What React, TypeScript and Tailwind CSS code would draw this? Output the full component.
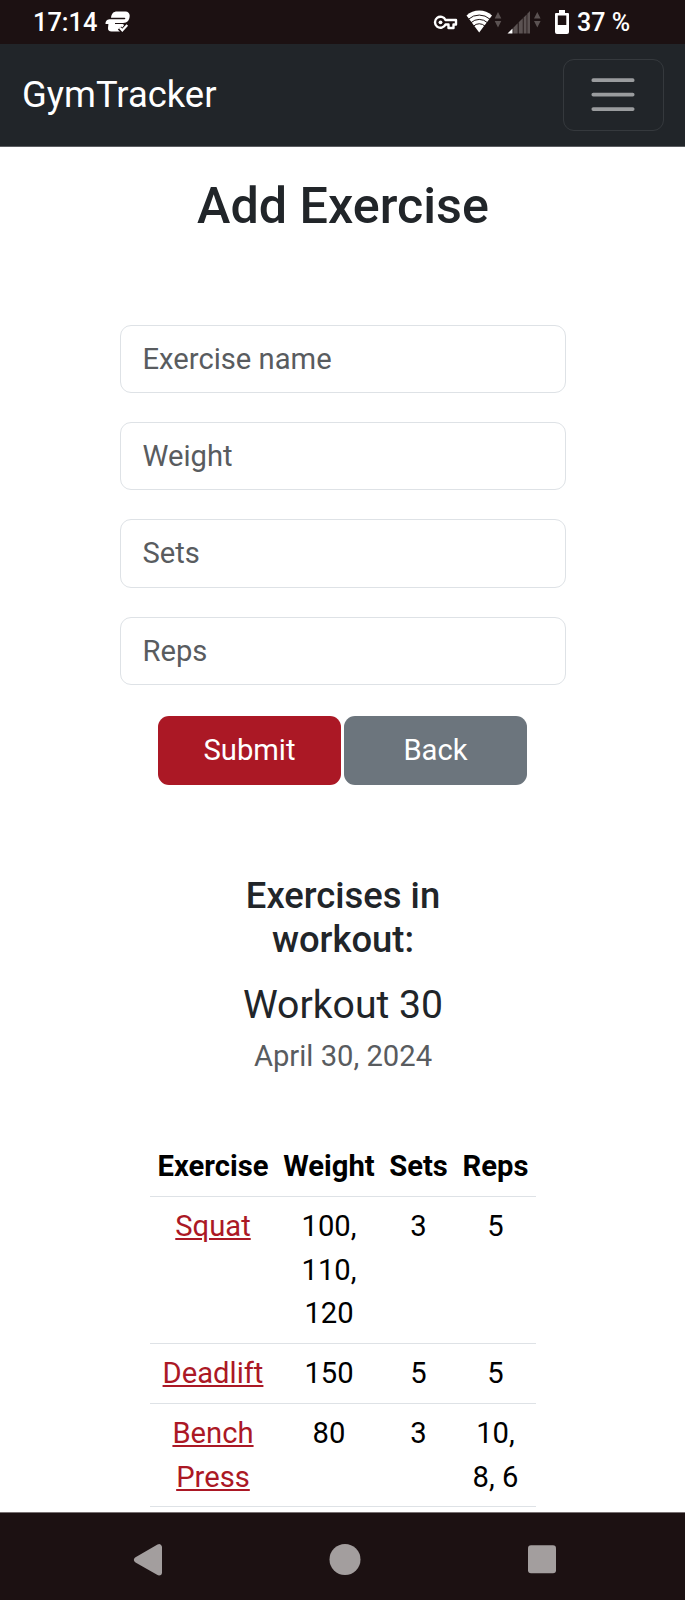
import type { ReactNode } from "react";

const fields = ["Exercise name", "Weight", "Sets", "Reps"];

const exercises = [
  { name: "Squat", weight: "100, 110, 120", sets: "3", reps: "5", row: "h-[147px]" },
  { name: "Deadlift", weight: "150", sets: "5", reps: "5", row: "h-[60px]" },
  { name: "Bench Press", weight: "80", sets: "3", reps: "10, 8, 6", row: "h-[103px]" },
];

function AppBadgeIcon() {
  return (
    <svg className="mt-[11px] ml-[8px] h-[22px] w-[26px]" viewBox="0 0 26 22" fill="#fff">
      <path d="M12 0.500H20.500C23 0.500 24.700 2.200 24.700 4.500C24.700 9 22.500 12 18 12H10V13H16C18 13 19 13.400 19 14.500L15 20.500H6.500C4 20.500 2.800 19 3 17L3.400 13H0.500C0.500 9.500 2.500 8.200 5.500 8.200H19.500Q20.300 8.200 20.300 7.500Q20.300 6.800 19.500 6.800H6C6.500 2.500 8.500 0.500 12 0.500Z" />
      <path d="M14.500 17L17.300 20L22 14.500" fill="none" stroke="#1c1112" strokeWidth="4.500" />
      <path d="M14.800 16.800L17.300 19.300L22.300 14" fill="none" stroke="#fff" strokeWidth="2.200" />
    </svg>
  );
}

function StatusIcons() {
  return (
    <svg className="h-[44px] w-[140px]" viewBox="430 0 140 44">
      <g fill="none" stroke="#fff" strokeWidth="2.400" strokeLinejoin="round">
        <path d="M445.500 20H456V24.500H453.500V28H448.500V24.500H445.500A5.500 5.500 0 1 1 445.500 20Z" />
      </g>
      <circle cx="440.500" cy="22.300" r="1.900" fill="#fff" />
      <path d="M466.500 15.500A19 19 0 0 1 492 15.500L479.200 32.500Z" fill="#fff" />
      <g fill="none" stroke="#1c1112" strokeWidth="1">
        <path d="M468.500 19.200A16 16 0 0 1 490 19.200" />
        <path d="M471 22.700A12 12 0 0 1 487.500 22.700" />
        <path d="M473.500 26.200A8 8 0 0 1 485 26.200" />
      </g>
      <g fill="#5b5252">
        <path d="M498 12L501.300 18.500H494.700ZM498 27.500L501.300 21H494.700Z" />
        <path d="M537.300 12L540.600 18.500H534ZM537.300 27.500L540.600 21H534Z" />
        <path d="M513.300 27.700L517.700 23.300V33.500H513.300ZM518.700 22.300L522.800 18.200V33.500H518.700ZM523.600 17.400L526.600 14.400V33.500H523.600ZM527.300 13.700L530 11V33.500H527.300Z" />
      </g>
      <path d="M507.500 33.500L512.500 28.500V33.500Z" fill="#fff" />
      <path d="M559 10H565V13H568Q569 13 569 14V32Q569 34 567 34H557Q555 34 555 32V14Q555 13 556 13H559ZM557.800 15.600V25H566.300V15.600Z" fill="#fff" fillRule="evenodd" />
    </svg>
  );
}

function StatusBar() {
  return (
    <div className="flex h-[44px] shrink-0 items-start justify-between bg-[#1c1112] text-[25px] leading-[45px] font-medium text-white">
      <div className="flex pl-[33px]">
        <span className="text-[25.4px]">17:14</span>
        <AppBadgeIcon />
      </div>
      <div className="flex w-[255px] gap-[7px]">
        <StatusIcons />
        <span className="whitespace-nowrap">37 %</span>
      </div>
    </div>
  );
}

function Navbar() {
  return (
    <header className="flex h-[103px] shrink-0 items-center justify-between border-b border-[#5b5d61] bg-[#212529] pr-[21px] pl-[22px]">
      <span className="pb-[2px] text-[36.4px] leading-[55px] text-white">GymTracker</span>
      <button
        aria-label="Toggle navigation"
        className="flex h-[72px] w-[101px] items-center justify-center rounded-[11px] border border-[#35393d] pr-[1px]"
      >
        <svg className="h-[36px] w-[44px]" viewBox="0 0 44 36" stroke="#9a9c9e" strokeWidth="3.700" strokeLinecap="round">
          <path d="M2.300 3.200H41.700M2.300 17.600H41.700M2.300 32.100H41.700" />
        </svg>
      </button>
    </header>
  );
}

function Cell({ children }: { children: ReactNode }) {
  return <td className="border-b border-[#dee2e6] px-[7px] pt-[8px] align-top">{children}</td>;
}

function WorkoutTable() {
  return (
    <table className="w-[386px] table-fixed border-collapse text-center text-[29.2px] leading-[43.8px] text-black">
      <colgroup>
        <col className="w-[126px]" />
        <col className="w-[106px]" />
        <col className="w-[73px]" />
        <col className="w-[81px]" />
      </colgroup>
      <thead>
        <tr className="h-[60px]">
          {["Exercise", "Weight", "Sets", "Reps"].map((label) => (
            <th key={label} className="border-b border-[#dee2e6] pt-[9px] align-top font-bold">
              {label}
            </th>
          ))}
        </tr>
      </thead>
      <tbody>
        {exercises.map((e) => (
          <tr key={e.name} className={e.row}>
            <Cell>
              <a href="#" className="text-[#ab1825] underline decoration-2 underline-offset-2">
                {e.name}
              </a>
            </Cell>
            <Cell>{e.weight}</Cell>
            <Cell>{e.sets}</Cell>
            <Cell>{e.reps}</Cell>
          </tr>
        ))}
      </tbody>
    </table>
  );
}

function SystemNav() {
  return (
    <nav className="flex h-[88px] shrink-0 items-start justify-between border-t border-[#777071] bg-[#1c1112] pt-[30px] pr-[129px] pl-[133px]">
      <svg className="h-[34px] w-[30px]" viewBox="0 0 30 34" fill="#a39e9e" stroke="#a39e9e" strokeWidth="6" strokeLinejoin="round">
        <path d="M4 16.800L26 4.200V29.400Z" />
      </svg>
      <svg className="mr-[1px] h-[34px] w-[32px]" viewBox="0 0 32 34" fill="#a39e9e">
        <circle cx="16" cy="16.500" r="15.500" />
      </svg>
      <svg className="h-[34px] w-[28px]" viewBox="0 0 28 34" fill="#a39e9e">
        <rect x="0" y="2.300" width="28" height="28" rx="3" />
      </svg>
    </nav>
  );
}

export default function App() {
  return (
    <div className="flex h-[1600px] w-[685px] flex-col overflow-hidden bg-white font-['Roboto',sans-serif] text-[#212529]">
      <StatusBar />
      <Navbar />
      <main className="flex min-h-0 flex-1 flex-col items-center overflow-hidden pt-[28px] pl-px">
        <h1 className="text-[50.3px] leading-[61px] font-medium">Add Exercise</h1>
        <form className="mt-[88.6px] flex w-[446px] flex-col gap-[29.2px]">
          {fields.map((label) => (
            <input
              key={label}
              placeholder={label}
              className="h-[68.2px] w-full rounded-[11px] border border-[#dee2e6] px-[21.5px] text-[29.2px] placeholder:text-[#595c5f]"
            />
          ))}
          <div className="mt-[2px] -ml-px flex justify-center gap-[3.500px] text-[29.2px] text-white">
            <button type="button" className="h-[69px] w-[182.5px] rounded-[11px] bg-[#ab1825]">
              Submit
            </button>
            <button type="button" className="h-[69px] w-[182.5px] rounded-[11px] bg-[#6c757d]">
              Back
            </button>
          </div>
        </form>
        <h2 className="mt-[88.8px] w-[230px] text-center text-[36.4px] leading-[43.8px] font-medium">
          Exercises in workout:
        </h2>
        <p className="mt-[21px] text-[39.2px] leading-[47px]">Workout 30</p>
        <p className="mt-[6px] mb-[57px] text-[29.2px] leading-[43.8px] text-[#595c5f]">April 30, 2024</p>
        <WorkoutTable />
      </main>
      <SystemNav />
    </div>
  );
}
